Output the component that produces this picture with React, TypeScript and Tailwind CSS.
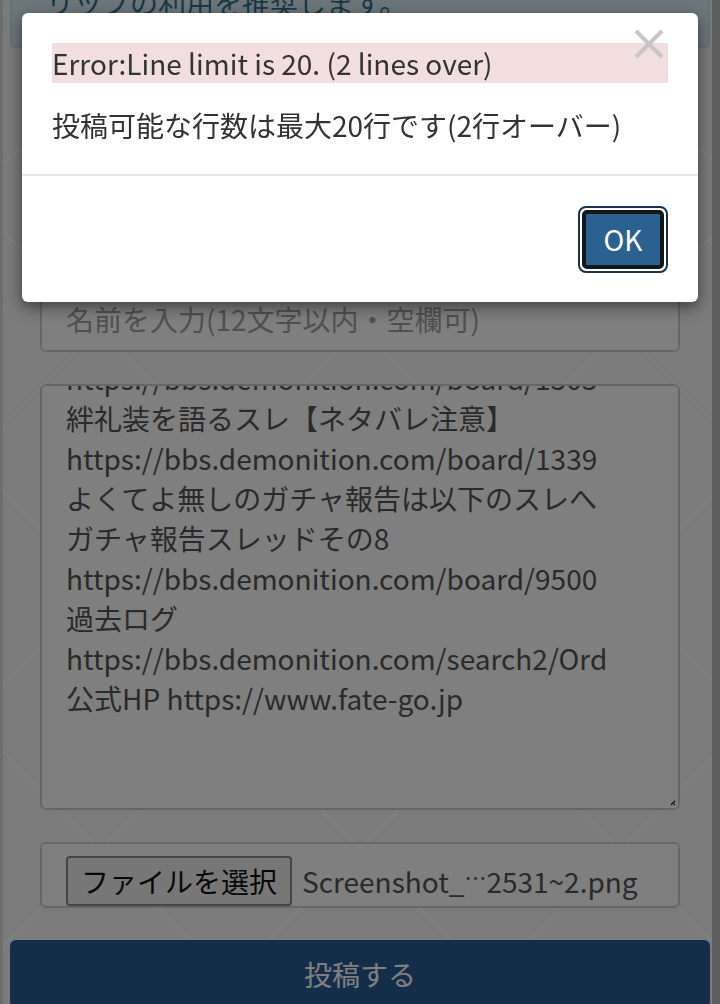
import React from "react";

// 投稿内容（テキストエリアにスクロールされた状態で表示される）
const bodyLines = [
  "https://bbs.demonition.com/board/1303",
  "絆礼装を語るスレ【ネタバレ注意】",
  "https://bbs.demonition.com/board/1339",
  "よくてよ無しのガチャ報告は以下のスレへ",
  "ガチャ報告スレッドその8",
  "https://bbs.demonition.com/board/9500",
  "過去ログ",
  "https://bbs.demonition.com/search2/Ord",
  "公式HP https://www.fate-go.jp",
];

function CloseIcon() {
  return (
    <svg width="30" height="30" viewBox="0 0 30 30" fill="none">
      <path d="M2 2 L28 28 M28 2 L2 28" stroke="#c6c6c6" strokeWidth="4" />
    </svg>
  );
}

function ResizeHandle() {
  return (
    <svg width="8" height="8" viewBox="0 0 8 8" fill="none">
      <path d="M7 3 L3 7 M7 6 L6 7" stroke="#222" strokeWidth="1.5" />
    </svg>
  );
}

export default function App() {
  return (
    <div className="relative min-h-screen overflow-hidden bg-[#f6f6f6] bg-[image:repeating-linear-gradient(45deg,transparent_0px,transparent_182px,#ffffff_182px,#ffffff_184px),repeating-linear-gradient(-45deg,transparent_0px,transparent_182px,#ffffff_182px,#ffffff_184px)] font-['Noto_Sans_CJK_JP','Noto_Sans',sans-serif] text-[28px] text-[#555]">
      {/* 画面端の影 */}
      <div className="absolute left-0 top-0 bottom-0 w-[3px] bg-[#dcdcdc]" />
      <div className="absolute right-0 top-0 bottom-0 w-[8px] bg-[#bcbcbc]" />

      {/* 上部のお知らせ */}
      <div className="mx-[10px] -mt-[20px] rounded-[6px] border-2 border-[#bce8f1] bg-[#d9edf7] pb-[24px] pl-[34px] leading-[40px] text-[#31708f]">
        リップの利用を推奨します。
      </div>

      {/* 投稿フォーム */}
      <div className="mt-[238px] flex flex-col gap-[32px] px-[40px]">
        <div className="flex h-[66px] items-center rounded-[6px] border-2 border-[#ccc] bg-white pl-[24px] text-[#a0a0a0]">
          名前を入力(12文字以内・空欄可)
        </div>

        <div className="relative h-[426px] overflow-hidden rounded-[6px] border-2 border-[#ccc] bg-white">
          <div className="-mt-[28px] px-[24px] leading-[40px] text-[#555] whitespace-nowrap">
            {bodyLines.map((line, i) => (
              <div key={i}>{line}</div>
            ))}
          </div>
          <div className="absolute right-[2px] bottom-[2px]">
            <ResizeHandle />
          </div>
        </div>

        <div className="flex h-[66px] items-start gap-[10px] overflow-visible rounded-[6px] border-2 border-[#ccc] bg-white pl-[24px] pt-[12px]">
          <button className="h-[50px] w-[226px] rounded-[4px] border-2 border-[#8a8a8a] bg-[#efefef] text-[#111] leading-[46px]">
            ファイルを選択
          </button>
          <span className="leading-[50px] text-[#555]">
            Screenshot_<span className="inline-block -translate-y-[7px] text-[22px]">…</span>2531~2.png
          </span>
        </div>
      </div>

      <div className="mt-[32px] px-[10px]">
        <button className="h-[68px] w-full rounded-[6px] bg-[#285c92] text-white">
          投稿する
        </button>
      </div>

      {/* モーダルの背景 */}
      <div className="fixed inset-0 bg-black/50" />

      {/* エラーダイアログ */}
      <div className="fixed left-[22px] top-[13px] w-[676px] rounded-[6px] bg-white text-[#333] shadow-[0_5px_15px_rgba(0,0,0,0.5)]">
        <div className="relative px-[30px] pt-[30px] pb-[29px]">
          <button className="absolute left-[612px] top-[16px]">
            <CloseIcon />
          </button>
          <p className="h-[40px] bg-[#f2dede] leading-[40px]">Error:Line limit is 20. (2 lines over)</p>
          <p className="mt-[22px] leading-[40px]">投稿可能な行数は最大20行です(2行オーバー)</p>
        </div>
        <div className="flex h-[128px] items-center justify-end border-t-2 border-[#e5e5e5] px-[30px]">
          <div className="rounded-[8px] border-2 border-[#17334d] bg-white p-[2px]">
            <button className="h-[59px] w-[82px] rounded-[5px] border-[4px] border-[#161616] bg-[#2b6191] text-[28px] text-white">
              OK
            </button>
          </div>
        </div>
      </div>
    </div>
  );
}
